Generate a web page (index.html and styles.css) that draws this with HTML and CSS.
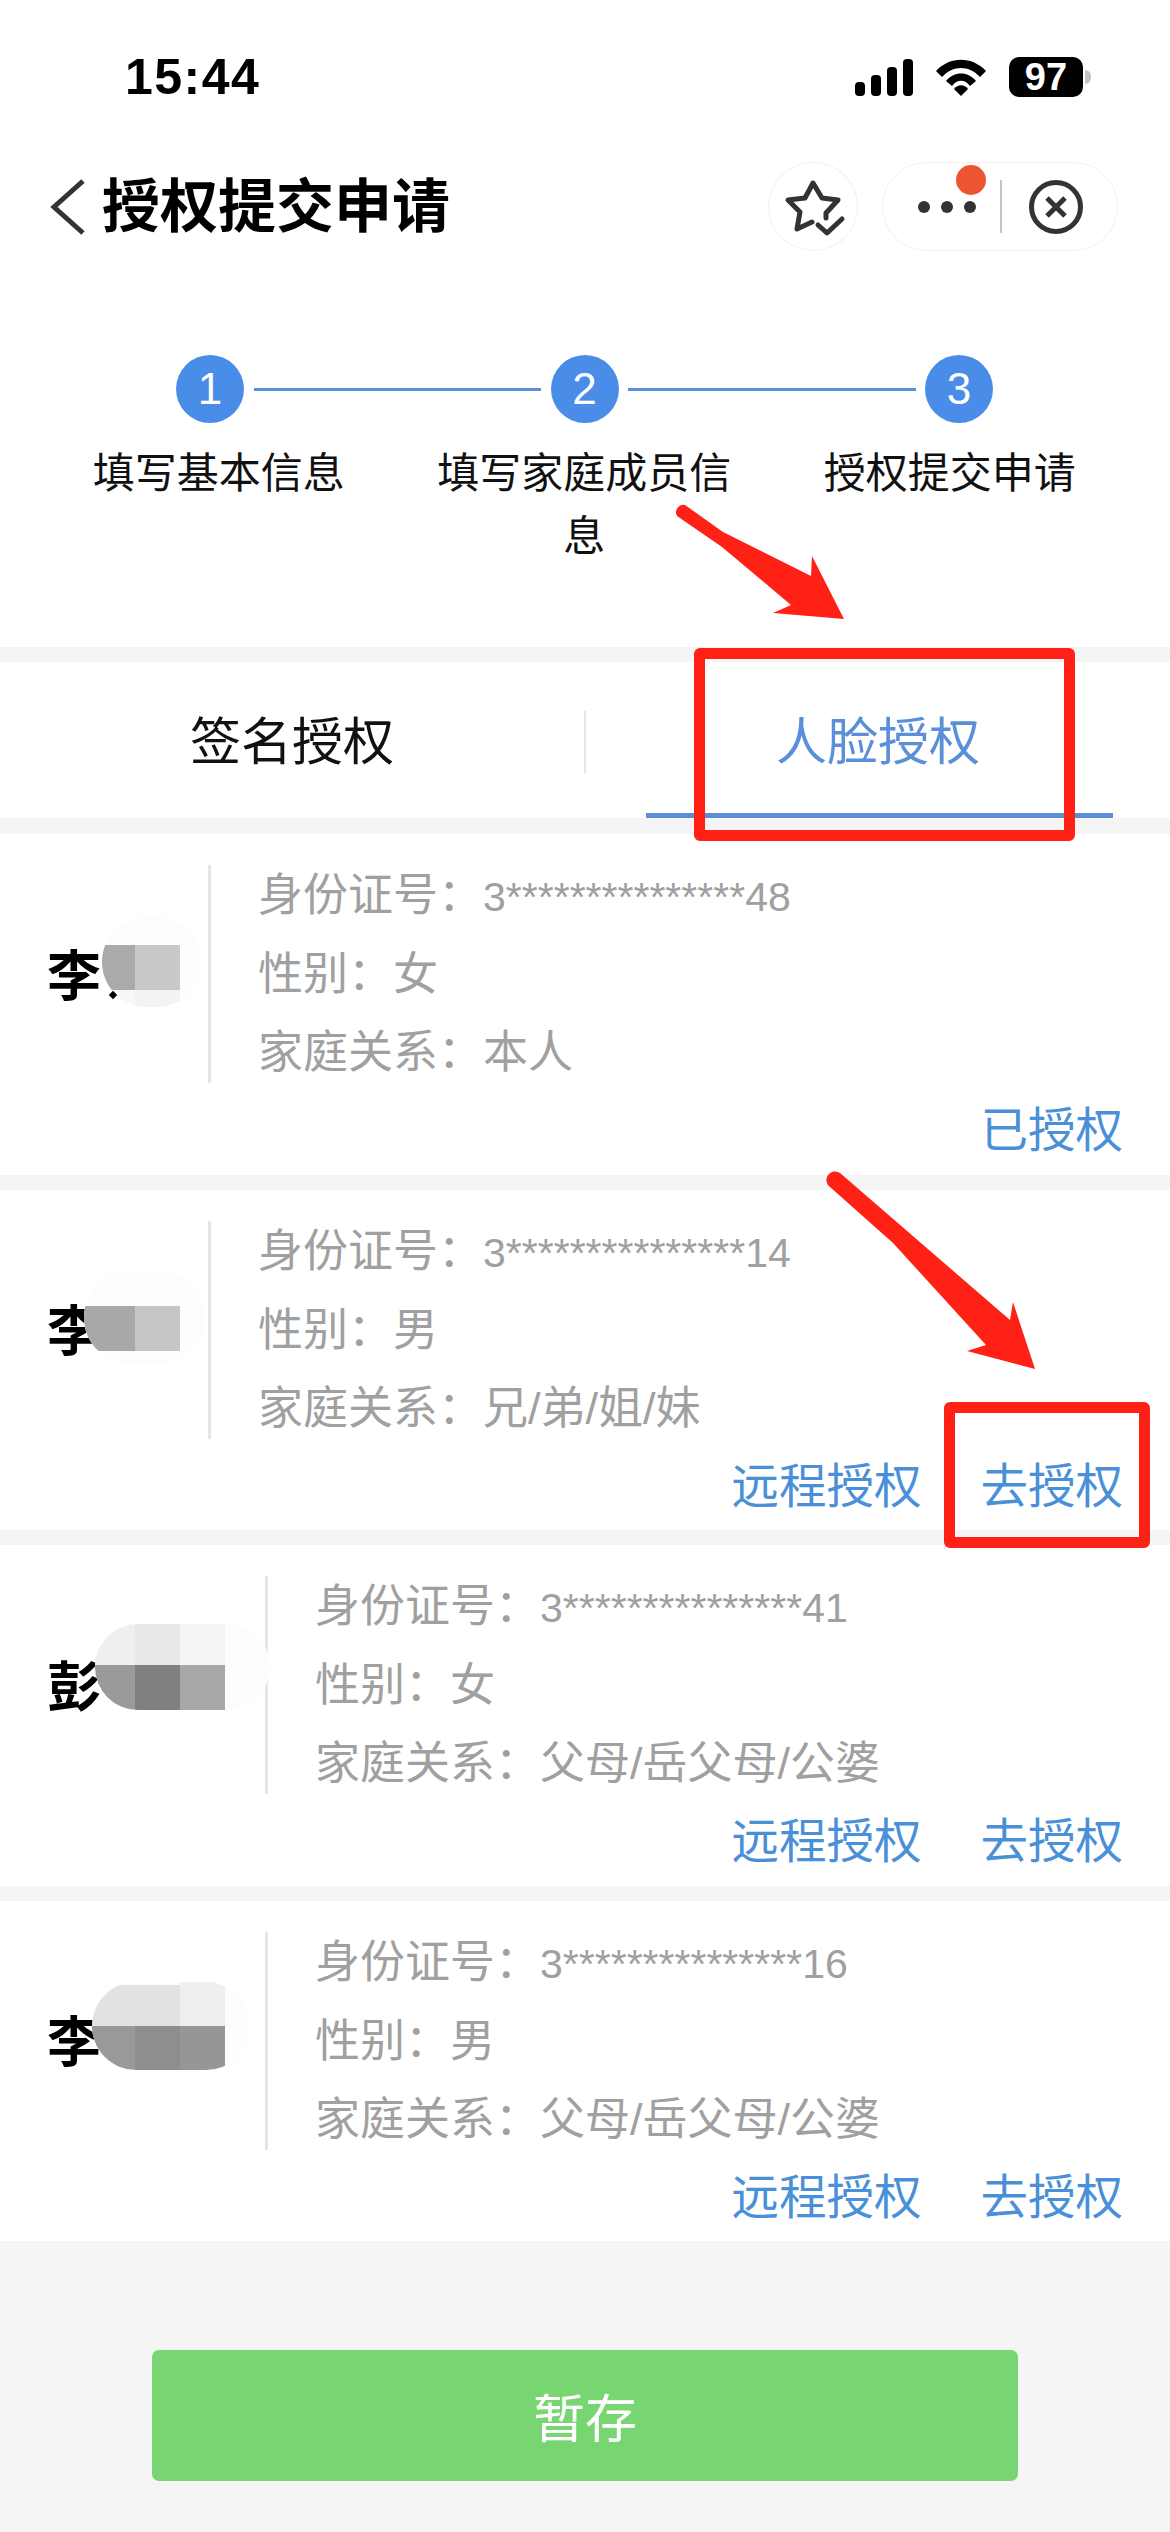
FILE: index.html
```html
<!DOCTYPE html>
<html lang="zh-CN">
<head>
  <meta charset="UTF-8" />
  <meta name="viewport" content="width=device-width, initial-scale=1.0" />
  <title>授权提交申请</title>
  <link rel="stylesheet" href="styles.css">
</head>
<body>
  <div class="screen">
    <div class="status-bar">
      <span class="time">15:44</span>
      <div class="status-icons">
        <svg class="signal" width="58" height="37" viewBox="0 0 58 37">
          <rect x="0" y="23" width="10" height="14" rx="4" />
          <rect x="16" y="16" width="10" height="21" rx="4" />
          <rect x="32" y="8" width="10" height="29" rx="4" />
          <rect x="48" y="0" width="10" height="37" rx="4" />
        </svg>
        <svg class="wifi" width="52" height="38" viewBox="0 0 52 38">
          <path d="M1 13 C15 -2 37 -2 51 13 L45 19 C34 7 18 7 7 19 Z" />
          <path d="M11 23 C19 13 33 13 41 23 L35 28 C30 21 22 21 17 28 Z" />
          <path d="M19 31 C23 26 29 26 33 31 L26 38 Z" />
        </svg>
        <div class="battery">
          <span class="battery-level">97</span>
          <span class="battery-cap"></span>
        </div>
      </div>
    </div>

    <div class="nav-bar">
      <svg class="back-icon" width="36" height="56" viewBox="0 0 36 56">
        <path d="M33 2 L4 28 L33 54" />
      </svg>
      <h1 class="nav-title">授权提交申请</h1>
      <div class="nav-actions">
        <div class="star-btn">
          <svg width="90" height="90" viewBox="0 0 90 90">
            <path d="M44 60 L29 67 L32 50 L20 38 L37 36 L45 21 L54 36 L70 38 L58 51 L58 56" />
            <path d="M50 63 L59 71 L74 57" />
          </svg>
        </div>
        <div class="capsule">
          <div class="capsule-more">
            <span class="dot"></span>
            <span class="dot"></span>
            <span class="dot"></span>
            <span class="badge"></span>
          </div>
          <span class="capsule-line"></span>
          <div class="capsule-close">
            <svg width="56" height="56" viewBox="0 0 56 56">
              <circle cx="28" cy="28" r="24.5" />
              <path d="M19 19 L37 37 M37 19 L19 37" />
            </svg>
          </div>
        </div>
      </div>
    </div>

    <div class="stepper">
      <div class="step-track">
        <span class="step-num">1</span>
        <span class="step-line"></span>
        <span class="step-num">2</span>
        <span class="step-line"></span>
        <span class="step-num">3</span>
      </div>
      <div class="step-labels">
        <div class="step-label">填写基本信息</div>
        <div class="step-label">填写家庭成员信息</div>
        <div class="step-label">授权提交申请</div>
      </div>
    </div>

    <div class="tabs">
      <div class="tab">签名授权</div>
      <span class="tab-sep"></span>
      <div class="tab tab-active">人脸授权</div>
    </div>

    <div class="card-list">
      <div class="card">
        <div class="person">
          <div class="name">李</div>
          <span class="sep"></span>
          <div class="info">
            <div>身份证号：<span class="id-no">3***************48</span></div>
            <div>性别：女</div>
            <div>家庭关系：本人</div>
          </div>
        </div>
        <div class="actions">
          <span>已授权</span>
        </div>
        <svg class="mosaic" width="270" height="240" viewBox="0 0 270 240">
          <defs><clipPath id="blur1"><rect x="102" y="83" width="100" height="90" rx="45" /></clipPath></defs>
          <rect x="102" y="83" width="100" height="90" rx="45" fill="#fdfdfd" />
          <g clip-path="url(#blur1)">
            <rect x="102" y="111" width="33" height="45" fill="#aaaaaa" />
            <rect x="135" y="111" width="45" height="45" fill="#c9c9c9" />
            <rect x="102" y="156" width="33" height="17" fill="#f7f7f7" />
            <rect x="135" y="156" width="45" height="17" fill="#f3f3f3" />
          </g>
          <rect x="110" y="158" width="6" height="6" transform="rotate(45 113 161)" fill="#000" />
        </svg>
      </div>

      <div class="card">
        <div class="person">
          <div class="name">李</div>
          <span class="sep"></span>
          <div class="info">
            <div>身份证号：<span class="id-no">3***************14</span></div>
            <div>性别：男</div>
            <div>家庭关系：兄/弟/姐/妹</div>
          </div>
        </div>
        <div class="actions">
          <span>远程授权</span>
          <span>去授权</span>
        </div>
        <svg class="mosaic" width="270" height="240" viewBox="0 0 270 240">
          <defs><clipPath id="blur2"><rect x="84" y="82" width="121" height="91" rx="45" /></clipPath></defs>
          <rect x="84" y="82" width="121" height="91" rx="45" fill="#fdfdfd" />
          <g clip-path="url(#blur2)">
            <rect x="84" y="116" width="51" height="45" fill="#a8a8a8" />
            <rect x="135" y="116" width="45" height="45" fill="#c6c6c6" />
          </g>
        </svg>
      </div>

      <div class="card">
        <div class="person">
          <div class="name name-wide">彭</div>
          <span class="sep"></span>
          <div class="info">
            <div>身份证号：<span class="id-no">3***************41</span></div>
            <div>性别：女</div>
            <div>家庭关系：父母/岳父母/公婆</div>
          </div>
        </div>
        <div class="actions">
          <span>远程授权</span>
          <span>去授权</span>
        </div>
        <svg class="mosaic" width="272" height="240" viewBox="0 0 272 240">
          <defs><clipPath id="blur3"><rect x="95" y="79" width="175" height="86" rx="43" /></clipPath></defs>
          <rect x="95" y="79" width="175" height="86" rx="43" fill="#fdfdfd" />
          <g clip-path="url(#blur3)">
            <rect x="95" y="79" width="40" height="41" fill="#efefef" />
            <rect x="135" y="79" width="45" height="41" fill="#e8e8e8" />
            <rect x="180" y="79" width="45" height="41" fill="#f5f5f5" />
            <rect x="95" y="120" width="40" height="45" fill="#9a9a9a" />
            <rect x="135" y="120" width="45" height="45" fill="#7f7f7f" />
            <rect x="180" y="120" width="45" height="45" fill="#a8a8a8" />
          </g>
        </svg>
      </div>

      <div class="card">
        <div class="person">
          <div class="name name-wide">李</div>
          <span class="sep"></span>
          <div class="info">
            <div>身份证号：<span class="id-no">3***************16</span></div>
            <div>性别：男</div>
            <div>家庭关系：父母/岳父母/公婆</div>
          </div>
        </div>
        <div class="actions">
          <span>远程授权</span>
          <span>去授权</span>
        </div>
        <svg class="mosaic" width="272" height="240" viewBox="0 0 272 240">
          <defs><clipPath id="blur4"><rect x="92" y="81" width="158" height="88" rx="44" /></clipPath></defs>
          <rect x="92" y="81" width="158" height="88" rx="44" fill="#fdfdfd" />
          <g clip-path="url(#blur4)">
            <rect x="92" y="84" width="88" height="41" fill="#e2e2e2" />
            <rect x="180" y="80" width="45" height="45" fill="#efefef" />
            <rect x="92" y="125" width="43" height="45" fill="#999999" />
            <rect x="135" y="125" width="45" height="45" fill="#8e8e8e" />
            <rect x="180" y="125" width="45" height="45" fill="#969696" />
          </g>
        </svg>
      </div>
    </div>

    <div class="footer">
      <button class="save-btn">暂存</button>
    </div>

    <div class="mark-box mark-tab"></div>
    <div class="mark-box mark-go"></div>
    <svg class="arrows" width="1170" height="2532" viewBox="0 0 1170 2532">
      <path d="M685 505 L723 532 L811 576 L812 556 L844 619 L773 613 L791 605 L722 547 L677 516 A7.5 7.5 0 0 1 685 505 Z" />
      <path d="M840 1173 L1010 1320 L1013 1302 L1035 1369 L967 1351 L986 1345 L893 1243 L830 1187 A8.5 8.5 0 0 1 840 1173 Z" />
    </svg>
  </div>
</body>
</html>
```

FILE: styles.css
```css
* {
    margin: 0;
    padding: 0;
    box-sizing: border-box;
}

body {
    font-family: "Noto Sans CJK SC", "Liberation Sans", sans-serif;
    background: #ffffff;
}

.screen {
    position: relative;
    width: 1170px;
    height: 2532px;
    overflow: hidden;
    background: #f5f5f5;
}

/* status bar */
.status-bar {
    display: flex;
    justify-content: space-between;
    align-items: center;
    height: 162px;
    padding: 0 79px 8px 125px;
    background: #ffffff;
    color: #000000;
}

.time {
    font-family: "Liberation Sans", sans-serif;
    font-size: 50px;
    font-weight: 700;
    letter-spacing: 1.5px;
}

.status-icons {
    display: flex;
    align-items: center;
    gap: 22px;
}

.battery {
    display: flex;
    align-items: center;
    gap: 2px;
}

.battery-level {
    width: 74px;
    height: 40px;
    border-radius: 10px;
    background: #000000;
    color: #ffffff;
    font-family: "Liberation Sans", sans-serif;
    font-size: 38px;
    font-weight: 700;
    line-height: 40px;
    text-align: center;
}

.battery-cap {
    width: 6px;
    height: 14px;
    border-radius: 0 7px 7px 0;
    background: #c4c4c4;
}

/* nav bar */
.nav-bar {
    display: flex;
    align-items: center;
    height: 89px;
    padding-left: 50px;
    background: #ffffff;
}

.back-icon path {
    fill: none;
    stroke: #333333;
    stroke-width: 5;
}

.nav-title {
    margin-left: 16px;
    padding-bottom: 9px;
    font-size: 58px;
    font-weight: 700;
    line-height: 80px;
    color: #000000;
}

.nav-actions {
    display: flex;
    gap: 24px;
    margin-left: auto;
    margin-right: 52px;
}

.star-btn {
    width: 90px;
    height: 89px;
    border: 1.5px solid #f1f1f1;
    border-radius: 50%;
}

.star-btn svg {
    display: block;
    margin: -1.5px;
}

.star-btn path {
    fill: none;
    stroke: #333333;
    stroke-width: 5;
    stroke-linecap: round;
    stroke-linejoin: round;
}

.capsule {
    display: flex;
    align-items: center;
    width: 236px;
    height: 89px;
    border: 1.5px solid #f1f1f1;
    border-radius: 45px;
}

.capsule-more {
    position: relative;
    display: flex;
    justify-content: flex-end;
    align-items: center;
    gap: 11px;
    width: 117px;
    height: 100%;
    padding-right: 24px;
}

.dot {
    width: 12px;
    height: 12px;
    border-radius: 50%;
    background: #333333;
}

.badge {
    position: absolute;
    left: 73px;
    top: 2px;
    width: 30px;
    height: 30px;
    border-radius: 50%;
    background: #ec5530;
}

.capsule-line {
    width: 1.5px;
    height: 53px;
    background: #c4c4c4;
}

.capsule-close {
    display: flex;
    justify-content: center;
    align-items: center;
    flex: 1;
    padding-right: 6px;
}

.capsule-close circle,
.capsule-close path {
    fill: none;
    stroke: #333333;
    stroke-width: 5;
}

/* stepper */
.stepper {
    height: 396px;
    padding-top: 104px;
    background: #ffffff;
}

.step-track {
    display: flex;
    align-items: center;
    padding: 0 177px 0 176px;
}

.step-num {
    flex: none;
    width: 68px;
    height: 68px;
    border-radius: 50%;
    background: #4a8de8;
    color: #ffffff;
    font-family: "Liberation Sans", sans-serif;
    font-size: 44px;
    line-height: 68px;
    text-align: center;
}

.step-line {
    flex: 1;
    height: 3px;
    margin: 0 9.5px;
    background: #5590dc;
}

.step-labels {
    display: grid;
    grid-template-columns: repeat(3, 365.5px);
    padding-left: 36px;
    margin-top: 15px;
}

.step-label {
    padding: 0 30px;
    font-size: 42px;
    line-height: 63px;
    text-align: center;
    color: #111111;
}

/* tabs */
.tabs {
    display: flex;
    align-items: center;
    height: 156px;
    margin-top: 15px;
    background: #ffffff;
}

.tab {
    position: relative;
    flex: 1;
    height: 100%;
    font-size: 51px;
    line-height: 152px;
    text-align: center;
    color: #111111;
}

.tab-sep {
    flex: none;
    width: 2px;
    height: 62px;
    margin-top: 4px;
    background: #e6e6e6;
}

.tab-active {
    color: #5b8fd8;
}

.tab-active::after {
    content: "";
    position: absolute;
    left: 60px;
    right: 57px;
    bottom: 0;
    height: 5px;
    background: #5b8ed6;
}

/* person cards */
.card-list {
    display: flex;
    flex-direction: column;
    gap: 15px;
    margin-top: 16px;
}

.card {
    position: relative;
    height: 340.5px;
    padding-top: 24px;
    background: #ffffff;
}

.person {
    display: flex;
    height: 234px;
}

.name {
    display: flex;
    align-items: center;
    width: 208px;
    height: 228px;
    padding-left: 47px;
    font-size: 54px;
    font-weight: 700;
    color: #000000;
}

.name-wide {
    width: 265px;
}

.sep {
    flex: none;
    width: 3px;
    height: 218px;
    margin-top: 7px;
    background: #e6e6e6;
}

.info {
    margin-left: 47px;
    margin-top: -1px;
    font-family: "Liberation Sans", "Noto Sans CJK SC", sans-serif;
    font-size: 45px;
    line-height: 78px;
    color: #a0a0a0;
    white-space: nowrap;
}

.id-no {
    font-size: 41px;
}

.actions {
    display: flex;
    justify-content: flex-end;
    align-items: center;
    gap: 59px;
    height: 78px;
    padding: 0 47px 9px 0;
    font-size: 47.5px;
    color: #4a90d9;
}

.mosaic {
    position: absolute;
    left: 0;
    top: 0;
}

/* footer */
.footer {
    padding: 109px 152px 0;
}

.save-btn {
    display: block;
    width: 100%;
    height: 131px;
    border: none;
    border-radius: 7px;
    background: #78d672;
    color: #ffffff;
    font-family: "Noto Sans CJK SC", sans-serif;
    font-size: 52px;
}

/* red annotations on top of the screenshot */
.mark-box {
    position: absolute;
    border: 11px solid #ff2115;
    border-radius: 6px;
}

.mark-tab {
    left: 694px;
    top: 648px;
    width: 381px;
    height: 193px;
}

.mark-go {
    left: 944px;
    top: 1402px;
    width: 206px;
    height: 146px;
}

.arrows {
    position: absolute;
    left: 0;
    top: 0;
    pointer-events: none;
}

.arrows path {
    fill: #ff2115;
}
```
